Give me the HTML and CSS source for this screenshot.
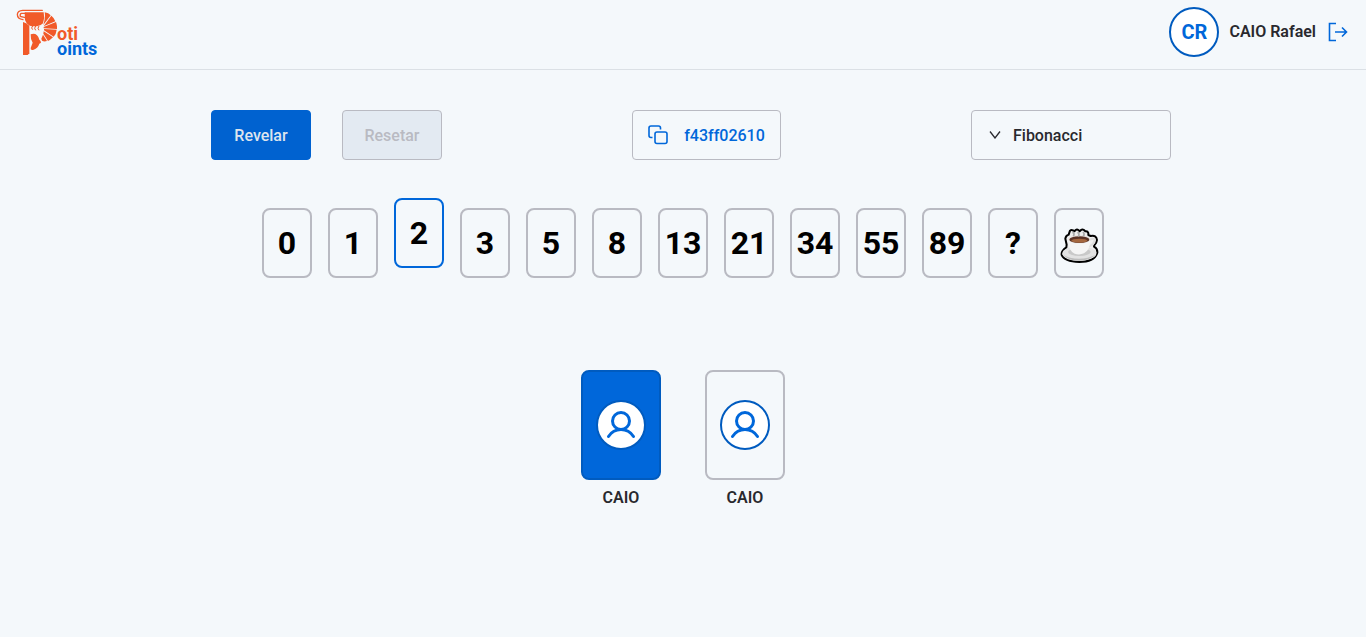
FILE: index.html
```html
<!DOCTYPE html>
<html lang="pt-BR">
<head>
<meta charset="utf-8">
<title>Poti Points</title>
<link rel="stylesheet" href="styles.css">
</head>
<body>
<header class="header">
  <a class="logo" href="#" aria-label="Poti Points">
    <svg class="logo-mark" viewBox="45 18 126 156" aria-hidden="true">
      <path d="M69 66Q78 68 88 77V160L83 165H69Z" fill="#f15a29"/>
      <path d="M74 37H131Q135 54 129 70Q122 78 111 79H96Q82 77 75 60Z" fill="#f15a29"/>
      <path d="M127 31H68Q53 32 52 43Q52 57 69 59M76 40H64Q59 42 61 49L76 53" fill="none" stroke="#f15a29" stroke-width="4" stroke-linecap="round"/>
      <path d="M98 78Q92 84 98 89M107 78Q101 85 107 91M117 78Q111 85 117 91" fill="none" stroke="#f15a29" stroke-width="3"/>
      <path d="M134 37Q146 39 152 46L130 75Q137 54 134 37ZM154 47Q163 54 166 64L131 79ZM168 66Q172 77 171 87L131 85V81ZM170 89Q169 101 161 110L132 91V87ZM159 112Q151 120 144 123L130 101L131 94ZM141 123Q132 126 126 122L124 116L129 104Z" fill="#f15a29"/>
      <path d="M92 103Q104 99 111 106Q117 112 118 119Q123 122 123 128L118 131Q114 144 101 149Q91 152 92 144L98 128Q91 117 92 103Z" fill="#f15a29"/>
    </svg>
    <span class="logo-text"><span class="logo-top">oti</span><span>oints</span></span>
  </a>
  <div class="user">
    <span class="initials">CR</span>
    <span class="user-name">CAIO Rafael</span>
    <button class="logout" type="button" aria-label="Sair">
      <svg width="20" height="20" viewBox="0 0 20 20" aria-hidden="true"><path d="M8 1.500H1.500V18.500H8M7 10H18.500M14 5.500L18.500 10L14 14.500"/></svg>
    </button>
  </div>
</header>
<main class="room">
  <div class="toolbar">
    <div class="actions">
      <button class="button primary" type="button">Revelar</button>
      <button class="button" type="button" disabled>Resetar</button>
    </div>
    <button class="room-code" type="button">
      <svg width="20" height="20" viewBox="0 0 20 20" aria-hidden="true"><path d="M4.500 12.500H3Q1 12.500 1 10.500V3Q1 1 3 1H10.500Q12.500 1 12.500 3V4.500"/><rect x="7" y="7" width="12" height="11.500" rx="2"/></svg>
      <span>f43ff02610</span>
    </button>
    <div class="deck-picker">
      <select class="deck-select" aria-label="Baralho"><option>Fibonacci</option></select>
      <svg class="chevron" width="12" height="8" viewBox="0 0 12 8" aria-hidden="true"><path d="M1 .5L6 7L11 .5"/></svg>
    </div>
  </div>
  <div class="cards">
    <button class="card" type="button">0</button>
    <button class="card" type="button">1</button>
    <button class="card selected" type="button">2</button>
    <button class="card" type="button">3</button>
    <button class="card" type="button">5</button>
    <button class="card" type="button">8</button>
    <button class="card" type="button">13</button>
    <button class="card" type="button">21</button>
    <button class="card" type="button">34</button>
    <button class="card" type="button">55</button>
    <button class="card" type="button">89</button>
    <button class="card" type="button">?</button>
    <button class="card" type="button" aria-label="Café">
      <svg width="40" height="42" viewBox="0 -12 120 126" aria-hidden="true">
        <path d="M33 14Q37 10 42 13L46 16L50 12Q54 9 58 12L62 16L66 12Q70 9 75 12L79 16Q86 15 88 21V27L95 30Q112 26 114 42Q113 52 106 58L105 62Q116 67 115 80Q107 108 61 108Q16 107 8 87Q6 75 22 64L23 56L19 38Q20 29 29 26L31 20Z" fill="#eee" stroke="#000" stroke-width="6" stroke-linejoin="round"/>
        <ellipse cx="61" cy="82" rx="51" ry="22" fill="#e2e2e2"/>
        <path d="M12 87Q31 105 60 104Q93 103 109 87Q88 98 60 98Q31 98 12 87Z" fill="#bdbdbd"/>
        <ellipse cx="61" cy="78" rx="34" ry="12" fill="#c9c9c9"/>
        <path d="M92 42Q108 33 106 45Q104 56 90 61" fill="none" stroke="#ddd" stroke-width="6"/>
        <path d="M28 43Q28 75 47 83Q61 88 75 82Q93 73 94 43Z" fill="#f5f5f5"/>
        <ellipse cx="61" cy="40" rx="33" ry="12" fill="#e8e1dd"/>
        <ellipse cx="61" cy="41" rx="30" ry="10" fill="#5b3326"/>
        <ellipse cx="61" cy="44" rx="24" ry="6" fill="#a5673f"/>
        <path d="M41 18Q48 24 43 31M56 18Q63 24 58 32M72 18Q78 24 73 31" fill="none" stroke="#aaa" stroke-width="5"/>
      </svg>
    </button>
  </div>
  <ul class="players">
    <li class="player">
      <div class="player-card voted"><span class="avatar">
        <svg width="30" height="30" viewBox="0 0 30 30" aria-hidden="true"><circle cx="15" cy="11" r="8.500"/><path d="M2.500 26.500Q7 19.500 15 19.500Q23 19.500 27.500 26.500"/></svg>
      </span></div>
      <span>CAIO</span>
    </li>
    <li class="player">
      <div class="player-card"><span class="avatar">
        <svg width="30" height="30" viewBox="0 0 30 30" aria-hidden="true"><circle cx="15" cy="11" r="8.500"/><path d="M2.500 26.500Q7 19.500 15 19.500Q23 19.500 27.500 26.500"/></svg>
      </span></div>
      <span>CAIO</span>
    </li>
  </ul>
</main>
</body>
</html>
```
FILE: styles.css
```css
* { box-sizing: border-box; }
body {
  margin: 0;
  min-height: 100vh;
  background: #f4f8fb;
  color: #29292e;
  font: 500 16px Roboto, sans-serif;
}
button, select { font: inherit; }
button { padding: 0; cursor: pointer; }
.header {
  display: flex;
  align-items: center;
  justify-content: space-between;
  height: 70px;
  padding: 0 18px 6px 15px;
  border-bottom: 1px solid #dbe0e5;
}
.logo { display: flex; align-items: flex-end; text-decoration: none; }
.logo-mark { width: 42px; height: 52px; }
.logo-text {
  display: flex;
  flex-direction: column;
  padding-bottom: 2px;
  font-size: 18px;
  font-weight: 700;
  line-height: 15px;
  color: #0067da;
}
.logo-top { color: #f15a29; }
.user { display: flex; align-items: center; gap: 10px; }
.user-name { font-weight: 600; }
.initials {
  display: grid;
  place-items: center;
  width: 50px;
  height: 50px;
  border: 2px solid #005bbf;
  border-radius: 50%;
  background: #fff;
  color: #0067da;
  font-size: 20px;
  font-weight: 700;
}
.logout { display: flex; border: 0; background: none; padding-left: 2px; }
.logout svg, .room-code svg { fill: none; stroke: #0067da; stroke-width: 1.6; }
.room { padding: 40px 16px 0; }
.toolbar {
  display: flex;
  justify-content: space-between;
  max-width: 976px;
  margin: 0 auto;
  padding-left: 16px;
}
.actions { display: flex; gap: 31px; }
.button {
  width: 100px;
  height: 50px;
  border: 1px solid #b9bac2;
  border-radius: 4px;
  background: #e3eaf2;
  color: #b9bac2;
}
.button.primary { background: #0062d0; border-color: #0062d0; color: #dde5ee; }
.room-code {
  display: flex;
  align-items: center;
  gap: 16px;
  height: 50px;
  padding: 0 15px;
  border: 1px solid #b9bac2;
  border-radius: 4px;
  background: none;
  color: #0067da;
}
.deck-picker { position: relative; }
.deck-select {
  appearance: none;
  width: 200px;
  height: 50px;
  padding: 0 16px 0 41px;
  border: 1px solid #b9bac2;
  border-radius: 4px;
  background: none;
  color: #29292e;
}
.chevron {
  position: absolute;
  left: 18px;
  top: 21px;
  fill: none;
  stroke: #29292e;
  stroke-width: 1.3;
  pointer-events: none;
}
.cards { display: flex; justify-content: center; gap: 16px; margin-top: 48px; }
.card {
  display: grid;
  place-items: center;
  width: 50px;
  height: 70px;
  border: 2px solid #b9bac2;
  border-radius: 8px;
  background: none;
  color: #000;
  font-size: 32px;
  font-weight: 700;
}
.card.selected { border-color: #0067da; transform: translateY(-10px); }
.players {
  display: flex;
  justify-content: center;
  gap: 44px;
  margin: 92px 0 0;
  padding: 0;
  list-style: none;
}
.player { display: flex; flex-direction: column; align-items: center; gap: 8px; font-weight: 600; }
.player-card {
  display: grid;
  place-items: center;
  width: 80px;
  height: 110px;
  border: 2px solid #b9bac2;
  border-radius: 8px;
}
.player-card.voted { background: #0067da; border-color: #005bbf; }
.avatar {
  display: grid;
  place-items: center;
  width: 50px;
  height: 50px;
  border: 2px solid #005bbf;
  border-radius: 50%;
  background: #fff;
}
.avatar svg { fill: none; stroke: #0067da; stroke-width: 3; stroke-linecap: round; }
```
